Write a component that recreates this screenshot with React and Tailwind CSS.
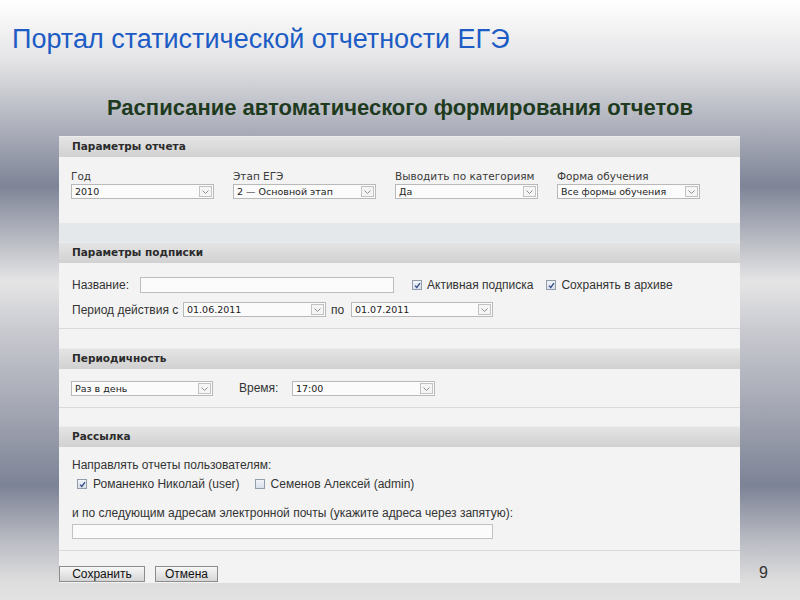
import React from 'react'

const bg =
  'bg-[linear-gradient(180deg,#ffffff_0%,#e4e4e6_10%,#aeb1bc_21%,#7e8497_31%,#b9bbc3_40%,#e5e5e6_47%,#c9cad0_55%,#a4a7b3_68%,#7d8396_81%,#b9bbc3_90%,#dedede_97%,#e2e2e2_100%)]'

function Select({ value, className }) {
  return (
    <div className={`flex h-[15px] items-center border border-[#b9b9b9] bg-[#fbfbfb] pl-[3px] pr-[1px] ${className}`}>
      <span className="flex-1 truncate text-[9.5px] leading-[13px] text-[#222] [font-family:'DejaVu_Sans',sans-serif]">
        {value}
      </span>
      <span className="flex h-[11px] w-[13px] items-center justify-center border border-[#c2c2c2] bg-[#f5f5f5]">
        <svg width="7" height="4" viewBox="0 0 7 4">
          <path d="M0.5 0.5 L3.5 3.5 L6.5 0.5" stroke="#8c8c8c" fill="none" />
        </svg>
      </span>
    </div>
  )
}

function Check({ checked }) {
  return (
    <span className="flex h-[10px] w-[10px] items-center justify-center border border-[#939cab] bg-[linear-gradient(#f1f4f8,#d9e0ea)]">
      {checked ? (
        <svg width="7" height="7" viewBox="0 0 7 7">
          <path d="M1 3.6 L2.8 5.4 L6 1.2" stroke="#2d4a86" strokeWidth="1.3" fill="none" />
        </svg>
      ) : null}
    </span>
  )
}

function Header({ children }) {
  return (
    <div className="flex h-[21px] items-center border-t border-[#ececec] bg-[linear-gradient(#e4e4e4,#d1d1d1)] pl-[13px] text-[10.5px] font-bold text-[#2b2b2b] [font-family:'DejaVu_Sans',sans-serif]">
      {children}
    </div>
  )
}

export default function App() {
  return (
    <div className={`flex h-[600px] w-[800px] flex-col overflow-hidden ${bg} [font-family:'Liberation_Sans',Arial,sans-serif]`}>
      <div className="pl-[12px] pt-[24px] text-[27px] leading-[30px] text-[#1c5cc4]">
        Портал статистической отчетности ЕГЭ
      </div>

      <div className="mt-[41px] text-center text-[22px] font-bold leading-[26px] text-[#1f3b1f]">
        Расписание автоматического формирования отчетов
      </div>

      <div className="mt-[15px] flex">
        <div className="ml-[59px] w-[681px] bg-[#f3f3f3] text-[12px] text-[#333]">
          <Header>Параметры отчета</Header>
          <div className="flex h-[66px] gap-[19px] px-[12px] pt-[13px] [font-family:'DejaVu_Sans',sans-serif]">
            {[
              ['Год', '2010'],
              ['Этап ЕГЭ', '2 — Основной этап'],
              ['Выводить по категориям', 'Да'],
              ['Форма обучения', 'Все формы обучения'],
            ].map(([label, value]) => (
              <div key={label} className="w-[143px]">
                <div className="text-[10.5px] leading-[13px] text-[#3a3a3a]">{label}</div>
                <Select value={value} className="mt-[1px] w-[143px]" />
              </div>
            ))}
          </div>
          <div className="h-[19px] bg-[#e5e8eb]" />

          <Header>Параметры подписки</Header>
          <div className="h-[66px] border-b border-[#dadada] px-[13px] pt-[14px]">
            <div className="flex h-[16px] items-center">
              <span className="w-[68px]">Название:</span>
              <span className="h-[16px] w-[254px] border border-[#bdbdbd] bg-[#fbfbfb]" />
              <span className="ml-[18px] flex items-center gap-[5px]">
                <Check checked />
                Активная подписка
              </span>
              <span className="ml-[13px] flex items-center gap-[5px]">
                <Check checked />
                Сохранять в архиве
              </span>
            </div>
            <div className="mt-[9px] flex h-[15px] items-center">
              <span className="w-[111px]">Период действия с</span>
              <Select value="01.06.2011" className="w-[143px]" />
              <span className="w-[25px] pl-[5px]">по</span>
              <Select value="01.07.2011" className="w-[142px]" />
            </div>
          </div>
          <div className="h-[19px]" />

          <Header>Периодичность</Header>
          <div className="flex h-[39px] items-start border-b border-[#dadada] px-[12px] pt-[12px]">
            <Select value="Раз в день" className="w-[142px]" />
            <span className="ml-[26px] w-[53px] text-[12px] leading-[15px]">Время:</span>
            <Select value="17:00" className="w-[143px]" />
          </div>
          <div className="h-[18px]" />

          <Header>Рассылка</Header>
          <div className="h-[104px] border-b border-[#dadada] px-[13px] pt-[11px]">
            <div className="leading-[14px]">Направлять отчеты пользователям:</div>
            <div className="mt-[5px] flex h-[14px] items-center pl-[5px]">
              <span className="flex items-center gap-[6px]">
                <Check checked />
                Романенко Николай (user)
              </span>
              <span className="ml-[15px] flex items-center gap-[6px]">
                <Check />
                Семенов Алексей (admin)
              </span>
            </div>
            <div className="mt-[15px] leading-[14px]">
              и по следующим адресам электронной почты (укажите адреса через запятую):
            </div>
            <div className="mt-[4px] h-[15px] w-[421px] border border-[#c2c2c2] bg-[#fbfbfb]" />
          </div>
          <div className="flex h-[32px] items-end gap-[10px] pb-[1px]">
            <button
              type="button"
              className="h-[16px] w-[86px] border border-[#8c8c8c] bg-[linear-gradient(#f7f7f7,#d6d6d6)] text-[12px] leading-[14px] text-[#111]"
            >
              Сохранить
            </button>
            <button
              type="button"
              className="h-[16px] w-[63px] border border-[#8c8c8c] bg-[linear-gradient(#f7f7f7,#d6d6d6)] text-[12px] leading-[14px] text-[#111]"
            >
              Отмена
            </button>
          </div>
        </div>
        <div className="flex flex-1 items-end pb-[1px] pl-[19px] text-[16px] leading-[18px] text-[#333]">9</div>
      </div>
    </div>
  )
}
